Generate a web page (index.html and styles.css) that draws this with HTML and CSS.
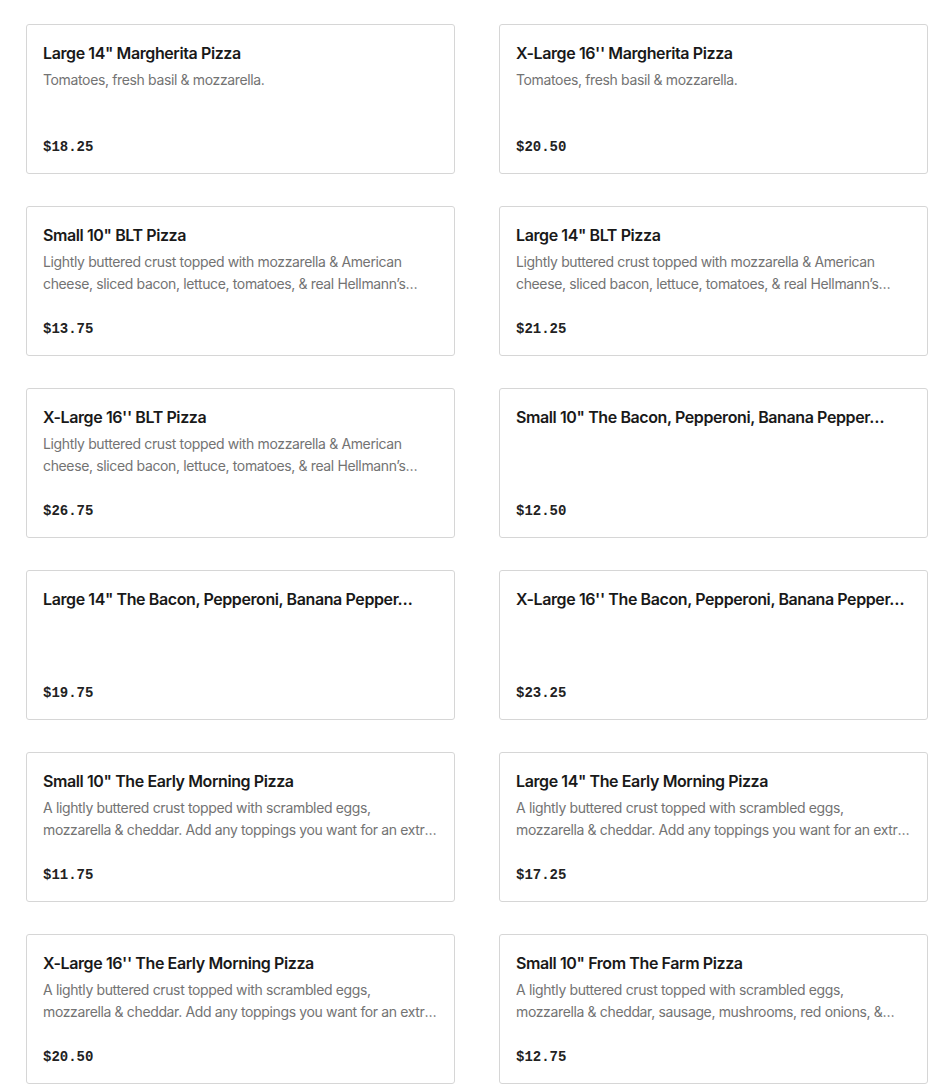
FILE: index.html
```html
<!DOCTYPE html>
<html lang="en">
<head>
    <meta charset="UTF-8">
    <meta name="viewport" content="width=device-width, initial-scale=1.0">
    <title>Pizza Menu</title>
    <link rel="stylesheet" href="styles.css">
</head>
<body>
    <div class="menu-grid">
        <div class="item-card">
            <h3 class="item-name">Large 14" Margherita Pizza</h3>
            <p class="item-desc">Tomatoes, fresh basil &amp; mozzarella.</p>
            <div class="item-price">$18.25</div>
        </div>
        <div class="item-card">
            <h3 class="item-name">X-Large 16'' Margherita Pizza</h3>
            <p class="item-desc">Tomatoes, fresh basil &amp; mozzarella.</p>
            <div class="item-price">$20.50</div>
        </div>
        <div class="item-card">
            <h3 class="item-name">Small 10" BLT Pizza</h3>
            <p class="item-desc">Lightly buttered crust topped with mozzarella &amp; American cheese, sliced bacon, lettuce, tomatoes, &amp; real Hellmann’s mayonnaise.</p>
            <div class="item-price">$13.75</div>
        </div>
        <div class="item-card">
            <h3 class="item-name">Large 14" BLT Pizza</h3>
            <p class="item-desc">Lightly buttered crust topped with mozzarella &amp; American cheese, sliced bacon, lettuce, tomatoes, &amp; real Hellmann’s mayonnaise.</p>
            <div class="item-price">$21.25</div>
        </div>
        <div class="item-card">
            <h3 class="item-name">X-Large 16'' BLT Pizza</h3>
            <p class="item-desc">Lightly buttered crust topped with mozzarella &amp; American cheese, sliced bacon, lettuce, tomatoes, &amp; real Hellmann’s mayonnaise.</p>
            <div class="item-price">$26.75</div>
        </div>
        <div class="item-card">
            <h3 class="item-name">Small 10" The Bacon, Pepperoni, Banana Pepper…</h3>
            <p class="item-desc"></p>
            <div class="item-price">$12.50</div>
        </div>
        <div class="item-card">
            <h3 class="item-name">Large 14" The Bacon, Pepperoni, Banana Pepper…</h3>
            <p class="item-desc"></p>
            <div class="item-price">$19.75</div>
        </div>
        <div class="item-card">
            <h3 class="item-name">X-Large 16'' The Bacon, Pepperoni, Banana Pepper…</h3>
            <p class="item-desc"></p>
            <div class="item-price">$23.25</div>
        </div>
        <div class="item-card">
            <h3 class="item-name">Small 10" The Early Morning Pizza</h3>
            <p class="item-desc">A lightly buttered crust topped with scrambled eggs, mozzarella &amp; cheddar. Add any toppings you want for an extra charge.</p>
            <div class="item-price">$11.75</div>
        </div>
        <div class="item-card">
            <h3 class="item-name">Large 14" The Early Morning Pizza</h3>
            <p class="item-desc">A lightly buttered crust topped with scrambled eggs, mozzarella &amp; cheddar. Add any toppings you want for an extra charge.</p>
            <div class="item-price">$17.25</div>
        </div>
        <div class="item-card">
            <h3 class="item-name">X-Large 16'' The Early Morning Pizza</h3>
            <p class="item-desc">A lightly buttered crust topped with scrambled eggs, mozzarella &amp; cheddar. Add any toppings you want for an extra charge.</p>
            <div class="item-price">$20.50</div>
        </div>
        <div class="item-card">
            <h3 class="item-name">Small 10" From The Farm Pizza</h3>
            <p class="item-desc">A lightly buttered crust topped with scrambled eggs, mozzarella &amp; cheddar, sausage, mushrooms, red onions, &amp; green peppers.</p>
            <div class="item-price">$12.75</div>
        </div>
    </div>
</body>
</html>
```

FILE: styles.css
```css
body {
    margin: 0;
    font-family: Inter, "Noto Sans", sans-serif;
    background-color: #fff;
    color: #191919;
}
.menu-grid {
    display: grid;
    grid-template-columns: 429px 429px;
    column-gap: 44px;
    row-gap: 32px;
    padding: 24px 0 0 26px;
}
.item-card {
    box-sizing: border-box;
    height: 150px;
    display: flex;
    flex-direction: column;
    padding: 16px;
    border: 1px solid #d6d6d6;
    border-radius: 3px;
    background: #fff;
}
.item-name {
    margin: 0;
    font-size: 16px;
    font-weight: 600;
    line-height: 24px;
    letter-spacing: -0.4px;
    white-space: nowrap;
    overflow: hidden;
    text-overflow: ellipsis;
}
.item-desc {
    margin: 4px 0 0;
    font-size: 14px;
    line-height: 22px;
    letter-spacing: -0.36px;
    color: #737373;
    display: -webkit-box;
    -webkit-line-clamp: 2;
    -webkit-box-orient: vertical;
    overflow: hidden;
}
.item-price {
    margin-top: auto;
    font-family: "Liberation Mono", "DejaVu Sans Mono", monospace;
    font-size: 14px;
    font-weight: bold;
    line-height: 20px;
    color: #222;
}
```
